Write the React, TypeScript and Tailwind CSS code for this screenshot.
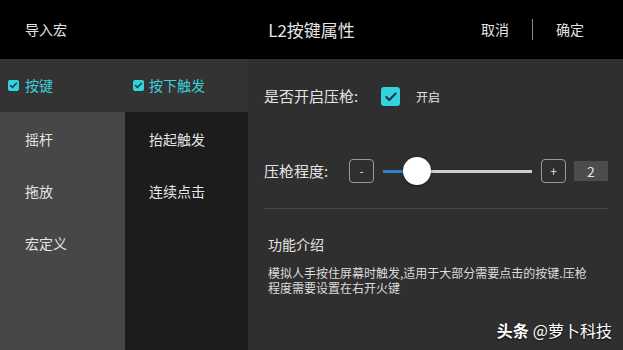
import { Check } from "lucide-react"

const font = { fontFamily: '"Noto Sans CJK SC", "Noto Sans", sans-serif' }

function TabCheck() {
  return (
    <span className="flex h-[11px] w-[11px] items-center justify-center rounded-[2px] bg-[#32d2df]">
      <Check className="h-[9px] w-[9px] text-[#1d3a40]" strokeWidth={4} />
    </span>
  )
}

export default function App() {
  const leftItems = ["摇杆", "拖放", "宏定义"]
  const midItems = ["抬起触发", "连续点击"]

  return (
    <div className="flex h-[350px] w-[623px] flex-col overflow-hidden bg-[#2f2f2f] text-[#e4e4e4]" style={font}>
      {/* header */}
      <div className="flex h-[59px] shrink-0 items-center bg-black px-[25px] text-[14px]">
        <div className="w-[150px]">导入宏</div>
        <div className="flex-1 text-center text-[17px]">L2按键属性</div>
        <div className="flex w-[150px] items-center justify-end">
          <span>取消</span>
          <span className="mx-[23px] h-[21px] w-px bg-[#8a8a8a]" />
          <span className="mr-[14px]">确定</span>
        </div>
      </div>

      <div className="flex flex-1">
        {/* left menus */}
        <div className="flex w-[248px] flex-col">
          <div className="flex h-[53px] items-center bg-[#333333] text-[14px] text-[#3cd0da]">
            <div className="flex w-[125px] items-center gap-[6px] pl-[8px]">
              <TabCheck />
              <span>按键</span>
            </div>
            <div className="flex items-center gap-[5px] pl-[8px]">
              <TabCheck />
              <span>按下触发</span>
            </div>
          </div>
          <div className="flex flex-1">
            <div className="flex w-[125px] flex-col bg-[#474747] pl-[25px] pt-[1px] text-[14px]">
              {leftItems.map((t) => (
                <div key={t} className="flex h-[52px] items-center">{t}</div>
              ))}
            </div>
            <div className="flex flex-1 flex-col bg-[#1c1c1c] pl-[24px] pt-[1px] text-[14px]">
              {midItems.map((t) => (
                <div key={t} className="flex h-[52px] items-center">{t}</div>
              ))}
            </div>
          </div>
        </div>

        {/* settings */}
        <div className="flex flex-1 flex-col pl-[16px] pr-[15px]">
          <div className="flex h-[77px] items-center pb-[2px]">
            <span className="w-[117px] text-[15px]">是否开启压枪:</span>
            <span className="flex h-[19px] w-[19px] items-center justify-center rounded-[3px] bg-[#33d3e0]">
              <Check className="h-[14px] w-[14px] text-[#17363c]" strokeWidth={3.5} />
            </span>
            <span className="ml-[16px] text-[12px]">开启</span>
          </div>

          <div className="flex h-[73px] items-center border-b border-[#454545] pb-[2px]">
            <span className="w-[85px] text-[15px]">压枪程度:</span>
            <span className="flex h-[24px] w-[25px] items-center justify-center rounded-[4px] border border-[#9a9a9a] text-[12px] leading-none">-</span>
            <div className="relative mx-[9px] flex h-[28px] flex-1 items-center">
              <div className="h-[3px] w-[24px] bg-[#2f7fc9]" />
              <div className="h-[3px] flex-1 bg-[#cfcfcf]" />
              <div className="absolute left-[20px] top-0 h-[28px] w-[28px] rounded-full bg-white shadow-[0_1px_3px_rgba(0,0,0,0.5)]" />
            </div>
            <span className="flex h-[24px] w-[25px] items-center justify-center rounded-[4px] border border-[#9a9a9a] text-[12px] leading-none">+</span>
            <span className="ml-[8px] flex h-[20px] w-[34px] items-center justify-center bg-[#4c4c4c] text-[14px]">2</span>
          </div>

          <div className="pl-[4px] pt-[25px]">
            <div className="text-[14px]">功能介绍</div>
            <div className="mt-[10px] w-[322px] text-[12px] leading-[15px] text-[#dcdcdc]">
              模拟人手按住屏幕时触发,适用于大部分需要点击的按键.压枪程度需要设置在右开火键
            </div>
          </div>

          <div className="-mr-[4px] mt-auto flex justify-end pb-[8px] text-[16px] text-white [text-shadow:0_1px_2px_rgba(0,0,0,0.8)]">
            <span className="font-bold">头条</span>
            <span className="ml-[4px]">@萝卜科技</span>
          </div>
        </div>
      </div>
    </div>
  )
}
